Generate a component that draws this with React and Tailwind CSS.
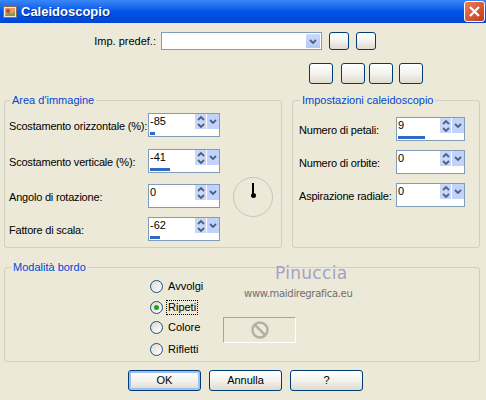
import React from 'react';

const font = { fontFamily: '"Liberation Sans", Arial, sans-serif' };

function Chevron({ dir = 'down', color = '#4d6185' }) {
  const d = dir === 'down' ? 'M1 1 L4 4 L7 1' : 'M1 4 L4 1 L7 4';
  return (
    <svg width="8" height="5" viewBox="0 0 8 5">
      <path d={d} fill="none" stroke={color} strokeWidth="1.8" />
    </svg>
  );
}

function Spin({ value, pct, width = 'w-[72px]' }) {
  return (
    <div className={`${width} h-[24px] border border-[#7f9db9] bg-white flex flex-col`}>
      <div className="flex">
        <div className="flex-1 pl-[1px] pt-[1px] text-[11px] leading-[13px]">{value}</div>
        <div className="w-[11px] h-[15px] bg-[#c8d7f7] flex flex-col items-center justify-center gap-[2px]">
          <Chevron dir="up" />
          <Chevron dir="down" />
        </div>
        <div className="w-[12px] h-[15px] ml-[1px] bg-[#c1d3fb] flex items-center justify-center">
          <Chevron dir="down" />
        </div>
      </div>
      <div className="mt-auto mb-[1px] mx-[1px] h-[3px]">
        <div className="h-full bg-[#316ac5]" style={{ width: pct }} />
      </div>
    </div>
  );
}

function XpButton({ className = '', children }) {
  return (
    <div
      className={`border border-[#003c74] rounded-[3px] bg-gradient-to-b from-[#ffffff] via-[#f3f2ec] to-[#dedbcf] flex items-center justify-center text-[11px] ${className}`}
    >
      {children}
    </div>
  );
}

function Row({ label, labelW, value, pct, spinW, className = '' }) {
  return (
    <div className={`flex items-center ${className}`}>
      <div className={`${labelW} text-[11px] pt-[3px] whitespace-nowrap tracking-[-0.2px]`}>{label}</div>
      <Spin value={value} pct={pct} width={spinW} />
    </div>
  );
}

function Radio({ label, checked, focus, className = '' }) {
  return (
    <div className={`flex items-center ${className}`}>
      <div className="w-[13px] h-[13px] rounded-full border border-[#1c5180] bg-gradient-to-br from-[#dcdad0] to-[#ffffff] flex items-center justify-center">
        {checked ? <div className="w-[5px] h-[5px] rounded-full bg-[#21a121]" /> : null}
      </div>
      <div
        className={`ml-[3px] text-[11px] leading-[13px] px-[1px] ${
          focus ? 'border border-dotted border-black' : 'border border-transparent'
        }`}
      >
        {label}
      </div>
    </div>
  );
}

export default function App() {
  return (
    <div className="relative w-[486px] h-[400px] bg-[#ece9d8] overflow-hidden text-black" style={font}>
      {/* title bar */}
      <div className="h-[23px] flex items-center bg-gradient-to-b from-[#3b86f7] via-[#0056e8] to-[#0046d6]">
        <svg width="14" height="14" viewBox="0 0 14 14" className="ml-[3px]">
          <rect x="0.5" y="1.5" width="13" height="11" fill="#f4e9d6" stroke="#8a6d4a" />
          <rect x="2" y="3" width="10" height="8" fill="#e99a6a" />
          <circle cx="5" cy="6" r="2" fill="#c9412b" />
          <path d="M2 11 L6 7 L9 9 L12 6 L12 11 Z" fill="#7d9a4e" />
        </svg>
        <div className="ml-[4px] text-white font-bold text-[13px] [text-shadow:1px_1px_0_#0a2a8a]">Caleidoscopio</div>
        <div className="ml-auto mr-[1px] w-[21px] h-[21px] rounded-[3px] border border-white bg-gradient-to-br from-[#f07a55] to-[#c23b14] flex items-center justify-center">
          <svg width="11" height="11" viewBox="0 0 11 11">
            <path d="M1 1 L10 10 M10 1 L1 10" stroke="#fff" strokeWidth="2.2" />
          </svg>
        </div>
      </div>

      {/* preset row */}
      <div className="mt-[9px] flex items-center">
        <div className="w-[156px] text-right text-[11px]">Imp. predef.:</div>
        <div className="ml-[5px] w-[161px] h-[18px] border border-[#7f9db9] bg-white flex justify-end items-center pr-[1px]">
          <div className="w-[14px] h-[14px] bg-gradient-to-b from-[#c9dafc] to-[#b4c9f6] flex items-center justify-center">
            <Chevron dir="down" />
          </div>
        </div>
        <XpButton className="ml-[7px] w-[20px] h-[18px]" />
        <XpButton className="ml-[7px] w-[20px] h-[18px]" />
      </div>

      {/* four buttons */}
      <div className="mt-[13px] flex pl-[309px]">
        <XpButton className="w-[24px] h-[21px]" />
        <XpButton className="ml-[8px] w-[24px] h-[21px]" />
        <XpButton className="ml-[4px] w-[24px] h-[21px]" />
        <XpButton className="ml-[6px] w-[24px] h-[21px]" />
      </div>

      {/* groups */}
      <div className="mt-[10px] flex">
        <fieldset className="ml-[4px] w-[278px] h-[154px] border border-[#d0d0bf] rounded-[3px] pl-[4px]">
          <legend className="ml-[1px] px-[2px] text-[11px] leading-[13px] text-[#0046d5]">Area d'immagine</legend>
          <div className="flex">
            <div className="flex flex-col">
              <Row className="mt-[6px]" label="Scostamento orizzontale (%):" labelW="w-[139px]" value="-85" pct="5px" />
              <Row className="mt-[12px]" label="Scostamento verticale (%):" labelW="w-[139px]" value="-41" pct="20px" />
              <Row className="mt-[11px]" label="Angolo di rotazione:" labelW="w-[139px]" value="0" pct="0px" />
              <Row className="mt-[9px]" label="Fattore di scala:" labelW="w-[139px]" value="-62" pct="10px" />
            </div>
            <div className="ml-[13px] mt-[70px] w-[40px] h-[40px] rounded-full border border-[#c9c5b8] flex justify-center">
              <div className="mt-[5px] flex flex-col items-center">
                <div className="w-[2px] h-[12px] bg-black" />
                <div className="-mt-[2px] w-[5px] h-[5px] rounded-full bg-black" />
              </div>
            </div>
          </div>
        </fieldset>

        <fieldset className="ml-[10px] w-[188px] h-[154px] border border-[#d0d0bf] rounded-[3px] pl-[6px]">
          <legend className="ml-[1px] px-[2px] text-[11px] leading-[13px] text-[#0046d5]">Impostazioni caleidoscopio</legend>
          <Row className="mt-[10px]" label="Numero di petali:" labelW="w-[97px]" value="9" pct="27px" spinW="w-[69px]" />
          <Row className="mt-[9px]" label="Numero di orbite:" labelW="w-[97px]" value="0" pct="0px" spinW="w-[69px]" />
          <Row className="mt-[9px]" label="Aspirazione radiale:" labelW="w-[97px]" value="0" pct="0px" spinW="w-[69px]" />
        </fieldset>
      </div>

      {/* border mode */}
      <fieldset className="mt-[13px] ml-[4px] w-[476px] h-[101px] border border-[#d0d0bf] rounded-[3px]">
        <legend className="ml-[6px] px-[2px] text-[11px] leading-[13px] text-[#0046d5]">Modalità bordo</legend>
        <div className="flex pl-[145px]">
          <div className="w-[73px] flex flex-col">
            <Radio className="mt-[5px]" label="Avvolgi" />
            <Radio className="mt-[6px]" label="Ripeti" checked focus />
            <Radio className="mt-[5px]" label="Colore" />
            <Radio className="mt-[7px]" label="Rifletti" />
          </div>
          <div className="mt-[43px] w-[73px] h-[26px] border border-t-[#a7a59b] border-l-[#a7a59b] border-r-white border-b-white flex items-center justify-center">
            <svg width="20" height="20" viewBox="0 0 20 20">
              <circle cx="10" cy="10" r="7.5" fill="none" stroke="#b3b0a6" strokeWidth="2.5" />
              <path d="M5 5 L15 15" stroke="#b3b0a6" strokeWidth="2.5" />
            </svg>
          </div>
        </div>
      </fieldset>

      {/* buttons */}
      <div className="mt-[8px] flex pl-[128px]">
        <XpButton className="w-[73px] h-[21px] shadow-[inset_0_0_0_2px_#9fbff3]">OK</XpButton>
        <XpButton className="ml-[8px] w-[73px] h-[21px]">Annulla</XpButton>
        <XpButton className="ml-[8px] w-[73px] h-[21px]">?</XpButton>
      </div>

      {/* watermark */}
      <div className="absolute left-[244px] top-[263px] flex flex-col" style={{ fontFamily: '"DejaVu Sans", sans-serif' }}>
        <div className="ml-[31px] text-[17px] leading-[20px] tracking-[0.3px] text-[#a3a3c6]">Pinuccia</div>
        <div className="mt-[5px] text-[10px] leading-[12px] text-[#6f6f6f] tracking-[-0.3px]">www.maidiregrafica.eu</div>
      </div>
    </div>
  );
}
